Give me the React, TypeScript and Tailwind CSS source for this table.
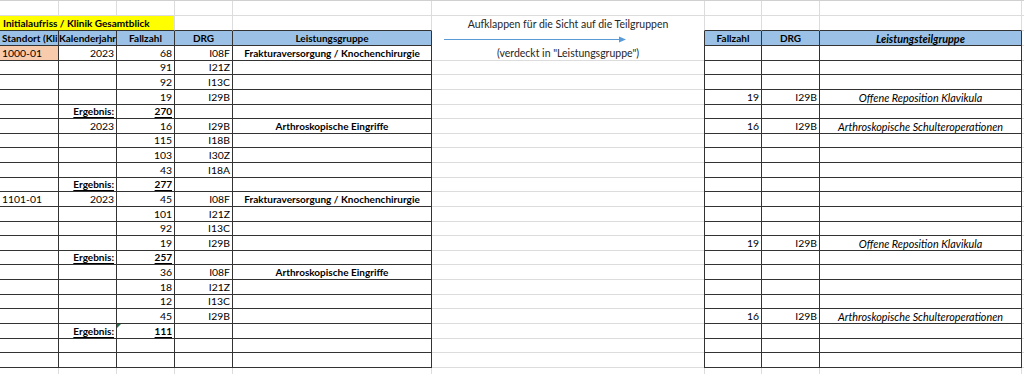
import React from 'react';

type Align = 'l' | 'r' | 'c';
type Cell = { t: string; a?: Align; b?: boolean; i?: boolean; u?: boolean; bg?: string };

const ROWS = 26;
const COLS = 10;

// row index: 0 empty, 1 title, 2 header, 3..24 data rows, 25 below
const inTable = (r: number, c: number) =>
  r >= 2 && r <= 24 && ((c >= 0 && c <= 4) || (c >= 6 && c <= 8));

const cells: Record<string, Cell> = {
  '2-0': { t: 'Standort (Klinik)', a: 'l', b: true, bg: 'blue' },
  '2-1': { t: 'Kalenderjahr', a: 'c', b: true, bg: 'blue' },
  '2-2': { t: 'Fallzahl', a: 'c', b: true, bg: 'blue' },
  '2-3': { t: 'DRG', a: 'c', b: true, bg: 'blue' },
  '2-4': { t: 'Leistungsgruppe', a: 'c', b: true, bg: 'blue' },
  '2-6': { t: 'Fallzahl', a: 'c', b: true, bg: 'blue' },
  '2-7': { t: 'DRG', a: 'c', b: true, bg: 'blue' },
  '2-8': { t: 'Leistungsteilgruppe', a: 'c', b: true, i: true, bg: 'blue' },
};

type Row = [string, string, string, string, string];

const leftRows: Row[] = [
  ['1000-01', '2023', '68', 'I08F', 'Frakturaversorgung / Knochenchirurgie'],
  ['', '', '91', 'I21Z', ''],
  ['', '', '92', 'I13C', ''],
  ['', '', '19', 'I29B', ''],
  ['', 'Ergebnis:', '270', '', ''],
  ['', '2023', '16', 'I29B', 'Arthroskopische Eingriffe'],
  ['', '', '115', 'I18B', ''],
  ['', '', '103', 'I30Z', ''],
  ['', '', '43', 'I18A', ''],
  ['', 'Ergebnis:', '277', '', ''],
  ['1101-01', '2023', '45', 'I08F', 'Frakturaversorgung / Knochenchirurgie'],
  ['', '', '101', 'I21Z', ''],
  ['', '', '92', 'I13C', ''],
  ['', '', '19', 'I29B', ''],
  ['', 'Ergebnis:', '257', '', ''],
  ['', '', '36', 'I08F', 'Arthroskopische Eingriffe'],
  ['', '', '18', 'I21Z', ''],
  ['', '', '12', 'I13C', ''],
  ['', '', '45', 'I29B', ''],
  ['', 'Ergebnis:', '111', '', ''],
];

leftRows.forEach((row, k) => {
  const r = k + 3;
  const sum = row[1] === 'Ergebnis:';
  if (row[0]) cells[`${r}-0`] = { t: row[0], a: 'l', bg: r === 3 ? 'salmon' : undefined };
  if (row[1]) cells[`${r}-1`] = { t: row[1], a: 'r', b: sum, u: sum };
  if (row[2]) cells[`${r}-2`] = { t: row[2], a: 'r', b: sum, u: sum };
  if (row[3]) cells[`${r}-3`] = { t: row[3], a: 'r' };
  if (row[4]) cells[`${r}-4`] = { t: row[4], a: 'c', b: true };
});

const rightRows: [number, string, string, string][] = [
  [6, '19', 'I29B', 'Offene Reposition Klavikula'],
  [8, '16', 'I29B', 'Arthroskopische Schulteroperationen'],
  [16, '19', 'I29B', 'Offene Reposition Klavikula'],
  [21, '16', 'I29B', 'Arthroskopische Schulteroperationen'],
];

rightRows.forEach(([r, n, drg, name]) => {
  cells[`${r}-6`] = { t: n, a: 'r' };
  cells[`${r}-7`] = { t: drg, a: 'r' };
  cells[`${r}-8`] = { t: name, a: 'c', i: true };
});

function SheetCell({ r, c }: { r: number; c: number }) {
  const d = cells[`${r}-${c}`];
  const dark = inTable(r, c);
  const bottomDark = dark || inTable(r + 1, c);
  const rightDark = dark || inTable(r, c + 1);

  const sideBorder =
    c === 5 || c === 9
      ? ''
      : c === 6
        ? `border-l border-r ${dark ? 'border-l-[#333] border-r-[#333]' : 'border-l-[#dcdcdc] border-r-[#dcdcdc]'}`
        : `border-r ${rightDark ? 'border-r-[#333]' : 'border-r-[#dcdcdc]'}`;

  const bottomBorder = `border-b ${bottomDark ? 'border-b-[#333]' : 'border-b-[#dcdcdc]'}`;

  const bg = d?.bg === 'blue' ? 'bg-[#9bc2e6]' : d?.bg === 'salmon' ? 'bg-[#f8cbad]' : '';
  const justify = d?.a === 'r' ? 'justify-end pr-[2px]' : d?.a === 'c' ? 'justify-center' : 'justify-start pl-[2px]';
  const size = d?.i ? 'text-[10.8px]' : d?.b ? 'text-[10px]' : 'text-[10.4px]';

  return (
    <div
      className={`relative flex items-end overflow-hidden whitespace-nowrap ${justify} ${sideBorder} ${bottomBorder} ${bg}`}
    >
      {r === 22 && c === 2 && (
        <span className="absolute left-0 top-0 h-0 w-0 border-r-[4px] border-t-[4px] border-r-transparent border-t-[#217346]" />
      )}
      {d && (
        <span
          className={`shrink-0 leading-[13px] ${size} ${d.b ? 'font-bold' : ''} ${d.i ? 'italic' : ''} ${d.u ? 'underline underline-offset-[1.5px]' : ''}`}
        >
          {d.t}
        </span>
      )}
    </div>
  );
}

function Arrow() {
  return (
    <svg width="182" height="7" viewBox="0 0 182 7" className="block">
      <line x1="0" y1="3.5" x2="176" y2="3.5" stroke="#5b9bd5" strokeWidth="1" />
      <polygon points="175,0.5 182,3.5 175,6.5" fill="#5b9bd5" />
    </svg>
  );
}

export default function App() {
  const items: React.ReactNode[] = [];

  for (let r = 0; r < ROWS; r++) {
    for (let c = 0; c < COLS; c++) {
      if (r === 1 && (c === 1 || c === 2)) continue;
      if ((r === 2 || r === 3) && c === 5) continue;

      if (r === 1 && c === 0) {
        items.push(
          <div
            key="title"
            className="col-span-3 flex items-end border-b border-r border-b-[#333] border-r-[#dcdcdc] bg-[#ffff00] pl-[3px]"
          >
            <span className="text-[10px] font-bold leading-[13px]">Initialaufriss / Klinik Gesamtblick</span>
          </div>,
        );
        continue;
      }

      if (r === 1 && c === 5) {
        items.push(
          <div
            key="note"
            className="row-span-3 flex flex-col items-center border-b border-b-[#dcdcdc] text-[10.5px] text-[#262626]"
          >
            <span className="mt-[2px] leading-[13px]">Aufklappen für die Sicht auf die Teilgruppen</span>
            <div className="mt-[5px] self-start pl-[12px]">
              <Arrow />
            </div>
            <span className="mt-[4px] leading-[13px]">(verdeckt in "Leistungsgruppe")</span>
          </div>,
        );
        continue;
      }

      items.push(<SheetCell key={`${r}-${c}`} r={r} c={c} />);
    }
  }

  return (
    <div className="h-[374px] w-[1024px] overflow-hidden bg-white font-['Lato',sans-serif] text-black">
      <div className="grid grid-cols-[59px_58px_58px_58px_199px_272px_58px_58px_202px_1fr] grid-rows-[15px_15px_15px_repeat(23,14.64px)] border-t border-t-[#d0d0d0]">
        {items}
      </div>
    </div>
  );
}
